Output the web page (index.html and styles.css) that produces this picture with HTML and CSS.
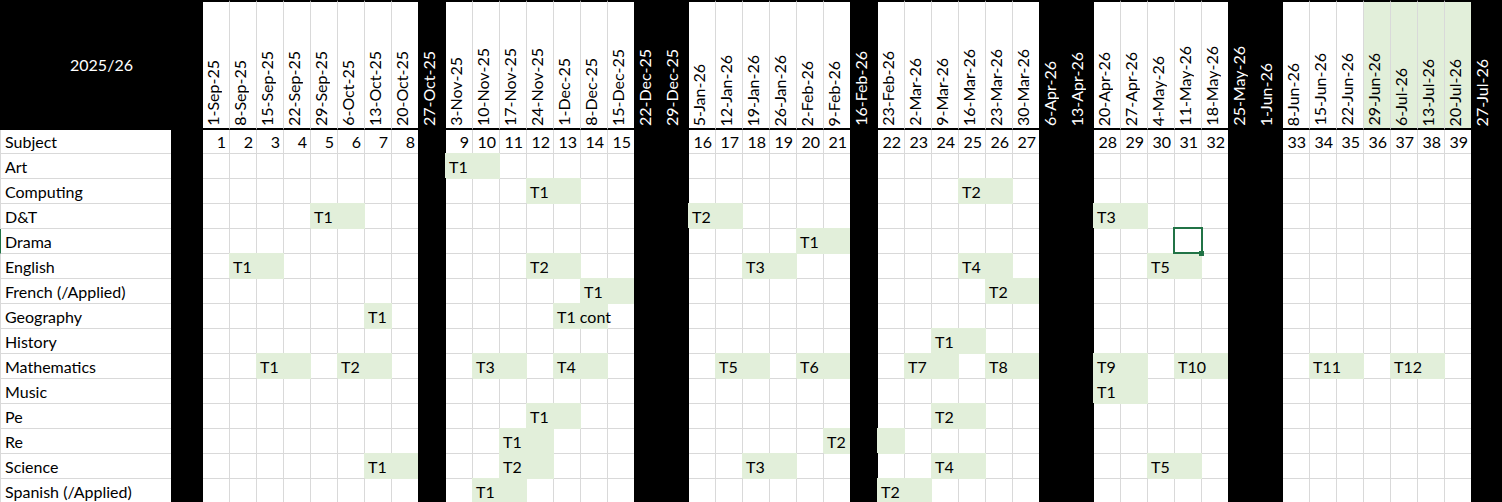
FILE: index.html
```html
<!DOCTYPE html>
<html lang="en">
<head>
<meta charset="utf-8">
<title>2025/26 Assessment Calendar</title>
<link rel="stylesheet" href="styles.css">
</head>
<body>
<div class="sheet">
  <div class="row head">
    <div class="title">2025/26</div>
    <div class="d"><span>1-Sep-25</span></div>
    <div class="d"><span>8-Sep-25</span></div>
    <div class="d"><span>15-Sep-25</span></div>
    <div class="d"><span>22-Sep-25</span></div>
    <div class="d"><span>29-Sep-25</span></div>
    <div class="d"><span>6-Oct-25</span></div>
    <div class="d"><span>13-Oct-25</span></div>
    <div class="d"><span>20-Oct-25</span></div>
    <div class="d h"><span>27-Oct-25</span></div>
    <div class="d"><span>3-Nov-25</span></div>
    <div class="d"><span>10-Nov-25</span></div>
    <div class="d"><span>17-Nov-25</span></div>
    <div class="d"><span>24-Nov-25</span></div>
    <div class="d"><span>1-Dec-25</span></div>
    <div class="d"><span>8-Dec-25</span></div>
    <div class="d"><span>15-Dec-25</span></div>
    <div class="d h"><span>22-Dec-25</span></div>
    <div class="d h"><span>29-Dec-25</span></div>
    <div class="d"><span>5-Jan-26</span></div>
    <div class="d"><span>12-Jan-26</span></div>
    <div class="d"><span>19-Jan-26</span></div>
    <div class="d"><span>26-Jan-26</span></div>
    <div class="d"><span>2-Feb-26</span></div>
    <div class="d"><span>9-Feb-26</span></div>
    <div class="d h"><span>16-Feb-26</span></div>
    <div class="d"><span>23-Feb-26</span></div>
    <div class="d"><span>2-Mar-26</span></div>
    <div class="d"><span>9-Mar-26</span></div>
    <div class="d"><span>16-Mar-26</span></div>
    <div class="d"><span>23-Mar-26</span></div>
    <div class="d"><span>30-Mar-26</span></div>
    <div class="d h"><span>6-Apr-26</span></div>
    <div class="d h"><span>13-Apr-26</span></div>
    <div class="d"><span>20-Apr-26</span></div>
    <div class="d"><span>27-Apr-26</span></div>
    <div class="d"><span>4-May-26</span></div>
    <div class="d"><span>11-May-26</span></div>
    <div class="d"><span>18-May-26</span></div>
    <div class="d h"><span>25-May-26</span></div>
    <div class="d h"><span>1-Jun-26</span></div>
    <div class="d"><span>8-Jun-26</span></div>
    <div class="d"><span>15-Jun-26</span></div>
    <div class="d"><span>22-Jun-26</span></div>
    <div class="d gr"><span>29-Jun-26</span></div>
    <div class="d gr"><span>6-Jul-26</span></div>
    <div class="d gr"><span>13-Jul-26</span></div>
    <div class="d gr"><span>20-Jul-26</span></div>
    <div class="d h"><span>27-Jul-26</span></div>
  </div>

  <div class="row top">
    <span class="name">Subject</span><span class="sp"></span>
    <span class="n">1</span><span class="n">2</span><span class="n">3</span><span class="n">4</span><span class="n">5</span><span class="n">6</span><span class="n">7</span><span class="n">8</span><span class="h"></span>
    <span class="n">9</span><span class="n">10</span><span class="n">11</span><span class="n">12</span><span class="n">13</span><span class="n">14</span><span class="n">15</span><span class="h w2"></span>
    <span class="n">16</span><span class="n">17</span><span class="n">18</span><span class="n">19</span><span class="n">20</span><span class="n">21</span><span class="h"></span>
    <span class="n">22</span><span class="n">23</span><span class="n">24</span><span class="n">25</span><span class="n">26</span><span class="n">27</span><span class="h w2"></span>
    <span class="n">28</span><span class="n">29</span><span class="n">30</span><span class="n">31</span><span class="n">32</span><span class="h w2"></span>
    <span class="n">33</span><span class="n">34</span><span class="n">35</span><span class="n">36</span><span class="n">37</span><span class="n">38</span><span class="n">39</span><span class="h"></span>
  </div>

  <div class="row">
    <span class="name">Art</span><span class="sp"></span>
    <span></span><span></span><span></span><span></span><span></span><span></span><span></span><span></span><span class="h"></span>
    <span class="g w2">T1</span><span></span><span></span><span></span><span></span><span></span><span class="h w2"></span>
    <span></span><span></span><span></span><span></span><span></span><span></span><span class="h"></span>
    <span></span><span></span><span></span><span></span><span></span><span></span><span class="h w2"></span>
    <span></span><span></span><span></span><span></span><span></span><span class="h w2"></span>
    <span></span><span></span><span></span><span></span><span></span><span></span><span></span><span class="h"></span>
  </div>

  <div class="row">
    <span class="name">Computing</span><span class="sp"></span>
    <span></span><span></span><span></span><span></span><span></span><span></span><span></span><span></span><span class="h"></span>
    <span></span><span></span><span></span><span class="g w2">T1</span><span></span><span></span><span class="h w2"></span>
    <span></span><span></span><span></span><span></span><span></span><span></span><span class="h"></span>
    <span></span><span></span><span></span><span class="g w2">T2</span><span></span><span class="h w2"></span>
    <span></span><span></span><span></span><span></span><span></span><span class="h w2"></span>
    <span></span><span></span><span></span><span></span><span></span><span></span><span></span><span class="h"></span>
  </div>

  <div class="row">
    <span class="name">D&amp;T</span><span class="sp"></span>
    <span></span><span></span><span></span><span></span><span class="g w2">T1</span><span></span><span></span><span class="h"></span>
    <span></span><span></span><span></span><span></span><span></span><span></span><span></span><span class="h w2"></span>
    <span class="g w2">T2</span><span></span><span></span><span></span><span></span><span class="h"></span>
    <span></span><span></span><span></span><span></span><span></span><span></span><span class="h w2"></span>
    <span class="g w2">T3</span><span></span><span></span><span></span><span class="h w2"></span>
    <span></span><span></span><span></span><span></span><span></span><span></span><span></span><span class="h"></span>
  </div>

  <div class="row">
    <span class="name act">Drama</span><span class="sp"></span>
    <span></span><span></span><span></span><span></span><span></span><span></span><span></span><span></span><span class="h"></span>
    <span></span><span></span><span></span><span></span><span></span><span></span><span></span><span class="h w2"></span>
    <span></span><span></span><span></span><span></span><span class="g w2">T1</span><span class="h"></span>
    <span></span><span></span><span></span><span></span><span></span><span></span><span class="h w2"></span>
    <span></span><span></span><span></span><span class="sel"></span><span></span><span class="h w2"></span>
    <span></span><span></span><span></span><span></span><span></span><span></span><span></span><span class="h"></span>
  </div>

  <div class="row">
    <span class="name">English</span><span class="sp"></span>
    <span></span><span class="g w2">T1</span><span></span><span></span><span></span><span></span><span></span><span class="h"></span>
    <span></span><span></span><span></span><span class="g w2">T2</span><span></span><span></span><span class="h w2"></span>
    <span></span><span></span><span class="g w2">T3</span><span></span><span></span><span class="h"></span>
    <span></span><span></span><span></span><span class="g w2">T4</span><span></span><span class="h w2"></span>
    <span></span><span></span><span class="g w2">T5</span><span></span><span class="h w2"></span>
    <span></span><span></span><span></span><span></span><span></span><span></span><span></span><span class="h"></span>
  </div>

  <div class="row">
    <span class="name">French (/Applied)</span><span class="sp"></span>
    <span></span><span></span><span></span><span></span><span></span><span></span><span></span><span></span><span class="h"></span>
    <span></span><span></span><span></span><span></span><span></span><span class="g w2">T1</span><span class="h w2"></span>
    <span></span><span></span><span></span><span></span><span></span><span></span><span class="h"></span>
    <span></span><span></span><span></span><span></span><span class="g w2">T2</span><span class="h w2"></span>
    <span></span><span></span><span></span><span></span><span></span><span class="h w2"></span>
    <span></span><span></span><span></span><span></span><span></span><span></span><span></span><span class="h"></span>
  </div>

  <div class="row">
    <span class="name">Geography</span><span class="sp"></span>
    <span></span><span></span><span></span><span></span><span></span><span></span><span class="g">T1</span><span></span><span class="h"></span>
    <span></span><span></span><span></span><span></span><span class="g w2">T1 cont</span><span></span><span class="h w2"></span>
    <span></span><span></span><span></span><span></span><span></span><span></span><span class="h"></span>
    <span></span><span></span><span></span><span></span><span></span><span></span><span class="h w2"></span>
    <span></span><span></span><span></span><span></span><span></span><span class="h w2"></span>
    <span></span><span></span><span></span><span></span><span></span><span></span><span></span><span class="h"></span>
  </div>

  <div class="row">
    <span class="name">History</span><span class="sp"></span>
    <span></span><span></span><span></span><span></span><span></span><span></span><span></span><span></span><span class="h"></span>
    <span></span><span></span><span></span><span></span><span></span><span></span><span></span><span class="h w2"></span>
    <span></span><span></span><span></span><span></span><span></span><span></span><span class="h"></span>
    <span></span><span></span><span class="g w2">T1</span><span></span><span></span><span class="h w2"></span>
    <span></span><span></span><span></span><span></span><span></span><span class="h w2"></span>
    <span></span><span></span><span></span><span></span><span></span><span></span><span></span><span class="h"></span>
  </div>

  <div class="row">
    <span class="name">Mathematics</span><span class="sp"></span>
    <span></span><span></span><span class="g w2">T1</span><span></span><span class="g w2">T2</span><span></span><span class="h"></span>
    <span></span><span class="g w2">T3</span><span></span><span class="g w2">T4</span><span></span><span class="h w2"></span>
    <span></span><span class="g w2">T5</span><span></span><span class="g w2">T6</span><span class="h"></span>
    <span></span><span class="g w2">T7</span><span></span><span class="g w2">T8</span><span class="h w2"></span>
    <span class="g w2">T9</span><span></span><span class="g w2">T10</span><span class="h w2"></span>
    <span></span><span class="g w2">T11</span><span></span><span class="g w2">T12</span><span></span><span class="h"></span>
  </div>

  <div class="row">
    <span class="name">Music</span><span class="sp"></span>
    <span></span><span></span><span></span><span></span><span></span><span></span><span></span><span></span><span class="h"></span>
    <span></span><span></span><span></span><span></span><span></span><span></span><span></span><span class="h w2"></span>
    <span></span><span></span><span></span><span></span><span></span><span></span><span class="h"></span>
    <span></span><span></span><span></span><span></span><span></span><span></span><span class="h w2"></span>
    <span class="g w2">T1</span><span></span><span></span><span></span><span class="h w2"></span>
    <span></span><span></span><span></span><span></span><span></span><span></span><span></span><span class="h"></span>
  </div>

  <div class="row">
    <span class="name">Pe</span><span class="sp"></span>
    <span></span><span></span><span></span><span></span><span></span><span></span><span></span><span></span><span class="h"></span>
    <span></span><span></span><span></span><span class="g w2">T1</span><span></span><span></span><span class="h w2"></span>
    <span></span><span></span><span></span><span></span><span></span><span></span><span class="h"></span>
    <span></span><span></span><span class="g w2">T2</span><span></span><span></span><span class="h w2"></span>
    <span></span><span></span><span></span><span></span><span></span><span class="h w2"></span>
    <span></span><span></span><span></span><span></span><span></span><span></span><span></span><span class="h"></span>
  </div>

  <div class="row">
    <span class="name">Re</span><span class="sp"></span>
    <span></span><span></span><span></span><span></span><span></span><span></span><span></span><span></span><span class="h"></span>
    <span></span><span></span><span class="g w2">T1</span><span></span><span></span><span></span><span class="h w2"></span>
    <span></span><span></span><span></span><span></span><span></span><span class="g">T2</span><span class="h"></span>
    <span class="g"></span><span></span><span></span><span></span><span></span><span></span><span class="h w2"></span>
    <span></span><span></span><span></span><span></span><span></span><span class="h w2"></span>
    <span></span><span></span><span></span><span></span><span></span><span></span><span></span><span class="h"></span>
  </div>

  <div class="row">
    <span class="name">Science</span><span class="sp"></span>
    <span></span><span></span><span></span><span></span><span></span><span></span><span class="g w2">T1</span><span class="h"></span>
    <span></span><span></span><span class="g w2">T2</span><span></span><span></span><span></span><span class="h w2"></span>
    <span></span><span></span><span class="g w2">T3</span><span></span><span></span><span class="h"></span>
    <span></span><span></span><span class="g w2">T4</span><span></span><span></span><span class="h w2"></span>
    <span></span><span></span><span class="g w2">T5</span><span></span><span class="h w2"></span>
    <span></span><span></span><span></span><span></span><span></span><span></span><span></span><span class="h"></span>
  </div>

  <div class="row">
    <span class="name">Spanish (/Applied)</span><span class="sp"></span>
    <span></span><span></span><span></span><span></span><span></span><span></span><span></span><span></span><span class="h"></span>
    <span></span><span class="g w2">T1</span><span></span><span></span><span></span><span></span><span class="h w2"></span>
    <span></span><span></span><span></span><span></span><span></span><span></span><span class="h"></span>
    <span class="g w2">T2</span><span></span><span></span><span></span><span></span><span class="h w2"></span>
    <span></span><span></span><span></span><span></span><span></span><span class="h w2"></span>
    <span></span><span></span><span></span><span></span><span></span><span></span><span></span><span class="h"></span>
  </div>
</div>
</body>
</html>
```

FILE: styles.css
```css
:root {
  --grid: #d9d9d9;
  --fill: #e2efda;
  --sel: #217346;
}

* {
  box-sizing: border-box;
  margin: 0;
  padding: 0;
}

html,
body {
  background: #fff;
}

body {
  overflow: hidden;
  font-family: Lato, "Liberation Sans", sans-serif;
  font-size: 16px;
  color: #000;
}

.sheet {
  width: 1502px;
}

.row {
  display: grid;
  grid-template-columns: 171px 32px repeat(47, 27px) 30px;
  height: 25px;
}

.row.top {
  height: 24px;
}

.row.head {
  height: 130px;
}

.row > * {
  display: flex;
  align-items: flex-end;
  min-width: 0;
  padding: 0 3px 1px;
  line-height: 20px;
  white-space: nowrap;
  border-right: 1px solid var(--grid);
  border-bottom: 1px solid var(--grid);
}

.name {
  padding-left: 4px;
  border-left: 1px solid var(--grid);
  border-right: 0 !important;
}

.name.act {
  border-left-color: var(--sel);
}

.sp {
  background: #000;
  border-color: #000 !important;
}

.n {
  justify-content: flex-end;
}

.w2 {
  grid-column: span 2;
}

.h {
  background: #000;
  color: #fff;
  border-color: #000 !important;
  box-shadow: -1px -1px 0 #000, 0 -1px 0 #000;
}

.g {
  background: var(--fill);
  border-color: var(--fill);
  box-shadow: -1px -1px 0 var(--fill), 0 -1px 0 var(--fill);
}

/* header row */
.title {
  grid-column: span 2;
  justify-content: center;
  align-items: center;
  background: #000;
  color: #fff;
  border: 0 !important;
  padding: 0;
}

.d {
  padding: 0 0 2px;
  justify-content: flex-start;
  border-top: 2px solid #000;
  border-bottom: 2px solid #000;
}

.d.gr {
  background: var(--fill);
}

.d span {
  writing-mode: vertical-rl;
  transform: rotate(180deg);
  line-height: 20px;
  width: 20px;
}

/* active cell selection */
.sel {
  position: relative;
}

.sel::before {
  content: "";
  position: absolute;
  left: -2px;
  top: -2px;
  right: -2px;
  bottom: -1px;
  border: 2px solid var(--sel);
}

.sel::after {
  content: "";
  position: absolute;
  right: -3px;
  bottom: -3px;
  width: 5px;
  height: 5px;
  background: var(--sel);
}
```
